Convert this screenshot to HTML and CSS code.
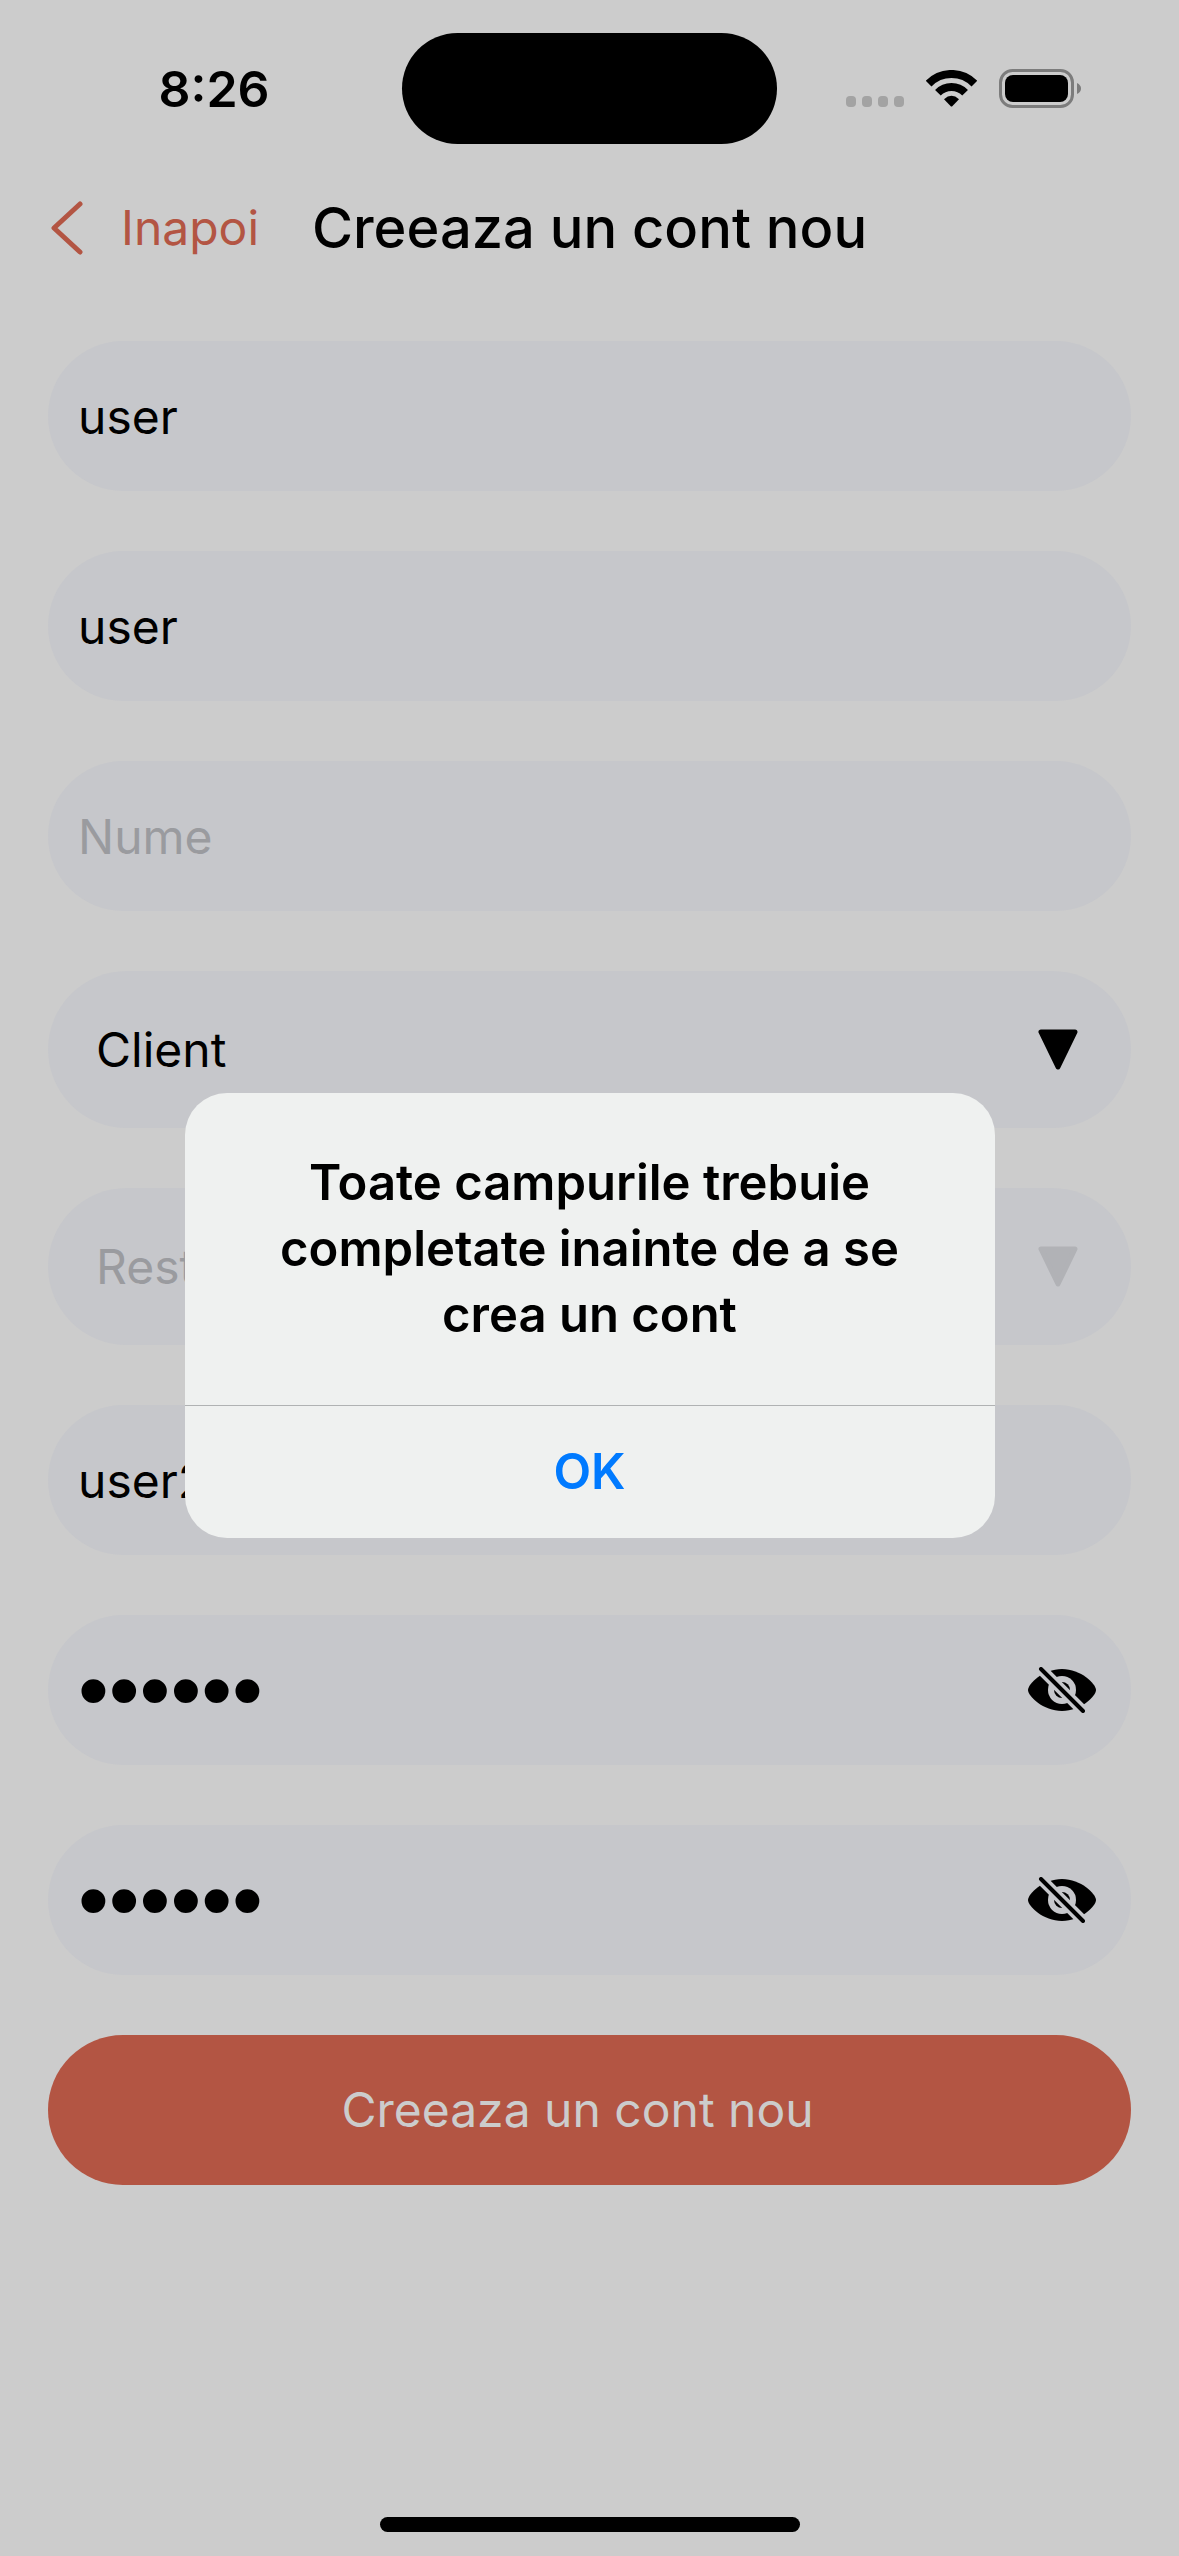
FILE: index.html
```html
<!DOCTYPE html>
<html lang="ro">
<head>
  <meta charset="utf-8">
  <meta name="viewport" content="width=device-width, initial-scale=1">
  <title>Creeaza un cont nou</title>
  <link rel="stylesheet" href="styles.css">
</head>
<body>
  <svg class="sprite" aria-hidden="true">
    <symbol id="icon-caret" viewBox="0 0 40 42">
      <path d="M3 3H37L20 38Z" fill="currentColor" stroke="currentColor" stroke-width="5" stroke-linejoin="round"/>
    </symbol>
    <symbol id="icon-eye-off" viewBox="0 0 68 46">
      <mask id="eye-cut">
        <rect width="68" height="46" fill="#fff"/>
        <circle cx="34" cy="23" r="14" fill="#000"/>
        <circle cx="34" cy="23" r="8" fill="#fff"/>
        <path d="M13 2 56 45" stroke="#000" stroke-width="11"/>
      </mask>
      <path d="M0 23C0 17 15 2 34 2S68 17 68 23 53 44 34 44 0 29 0 23Z" fill="currentColor" mask="url(#eye-cut)"/>
      <path d="M13 2 55 44" stroke="currentColor" stroke-width="4" stroke-linecap="round"/>
    </symbol>
  </svg>

  <div class="status-bar">
    <time class="status-time">8:26</time>
    <div class="island"></div>
    <div class="status-icons">
      <div class="signal"><span></span><span></span><span></span><span></span></div>
      <svg class="wifi" viewBox="0 0 51 37" aria-hidden="true">
        <g fill="none" stroke="#000" stroke-width="8">
          <path d="M2.6 13.6A32 32 0 0 1 48.4 13.6"/>
          <path d="M11.9 22.8A19 19 0 0 1 39.1 22.8"/>
        </g>
        <path d="M18 29.2Q25.5 22.400 33 29.200L26.500 36Q25.500 37 24.500 36Z"/>
      </svg>
      <svg class="battery" viewBox="0 0 82 39" aria-hidden="true">
        <rect x="1.500" y="1.500" width="72" height="36" rx="12" fill="none" stroke="#7c7c7c" stroke-width="3"/>
        <rect x="6" y="6" width="63" height="27" rx="8"/>
        <path d="M78 14Q82 16 82 19.500T78 25Z" fill="#7c7c7c"/>
      </svg>
    </div>
  </div>

  <header class="nav">
    <a class="back" href="#">
      <svg class="chevron" viewBox="0 0 32 54" aria-hidden="true"><path d="M29 3 3 27 29 51"/></svg>
      Inapoi
    </a>
    <h1 class="title">Creeaza un cont nou</h1>
  </header>

  <main>
    <form class="form">
      <input class="field" type="text" value="user" aria-label="Utilizator">
      <input class="field" type="text" value="user" aria-label="Prenume">
      <input class="field" type="text" placeholder="Nume" aria-label="Nume">
      <div class="picker">
        <select class="field" aria-label="Tip cont"><option>Client</option></select>
        <svg class="caret" aria-hidden="true"><use href="#icon-caret"/></svg>
      </div>
      <div class="picker">
        <select class="field" aria-label="Restaurant" disabled><option>Restaurant</option></select>
        <svg class="caret" aria-hidden="true"><use href="#icon-caret"/></svg>
      </div>
      <input class="field" type="text" value="user2" aria-label="Email">
      <div class="secret">
        <input class="field" type="password" value="123456" aria-label="Parola">
        <button class="reveal" type="button" aria-label="Arata parola"><svg class="eye" aria-hidden="true"><use href="#icon-eye-off"/></svg></button>
      </div>
      <div class="secret">
        <input class="field" type="password" value="123456" aria-label="Confirma parola">
        <button class="reveal" type="button" aria-label="Arata parola"><svg class="eye" aria-hidden="true"><use href="#icon-eye-off"/></svg></button>
      </div>
      <button class="submit" type="submit">Creeaza un cont nou</button>
    </form>
  </main>

  <div class="home-indicator"></div>

  <div class="overlay">
    <div class="alert" role="alertdialog" aria-modal="true" aria-labelledby="alert-title">
      <h2 class="alert-title" id="alert-title">Toate campurile trebuie completate inainte de a se crea un cont</h2>
      <button class="alert-ok" type="button">OK</button>
    </div>
  </div>
</body>
</html>
```

FILE: styles.css
```css
* {
  box-sizing: border-box;
}

body {
  margin: 0;
  min-height: 100vh;
  display: flex;
  flex-direction: column;
  background: #ccc;
  color: #000;
  font-family: Inter, "Liberation Sans", sans-serif;
  font-size: 48px;
  line-height: 66px;
}

button,
input,
select {
  font: inherit;
  color: inherit;
  border: 0;
  margin: 0;
}

.sprite {
  position: absolute;
  width: 0;
  height: 0;
}

/* Status bar */
.status-bar {
  display: grid;
  grid-template-columns: 1fr auto 1fr;
  align-items: center;
  height: 177px;
}

.status-time {
  justify-self: center;
  padding-left: 26px;
  font-size: 50px;
  font-weight: 600;
}

.island {
  width: 375px;
  height: 111px;
  border-radius: 56px;
  background: #000;
}

.status-icons {
  display: flex;
  align-items: center;
  justify-content: flex-end;
  gap: 22px;
  padding-right: 98px;
}

.signal {
  display: flex;
  align-self: flex-end;
  gap: 6px;
  padding-bottom: 1px;
}

.signal span {
  width: 10px;
  height: 11px;
  border-radius: 4px;
  background: #a3a3a3;
}

.wifi {
  width: 51px;
  height: 37px;
}

.battery {
  width: 82px;
  height: 39px;
}

/* Navigation */
.nav {
  display: grid;
  grid-template-columns: 1fr auto 1fr;
  align-items: center;
  height: 102px;
}

.back {
  display: flex;
  align-items: center;
  gap: 38px;
  padding-left: 51px;
  color: #b35543;
  text-decoration: none;
}

.chevron {
  width: 32px;
  height: 54px;
  fill: none;
  stroke: currentColor;
  stroke-width: 5;
  stroke-linecap: round;
  stroke-linejoin: round;
}

.title {
  margin: 0;
  font-size: 56px;
  font-weight: 500;
}

/* Form */
.form {
  display: flex;
  flex-direction: column;
  gap: 60px;
  padding: 62px 48px;
}

.field {
  width: 100%;
  height: 150px;
  padding: 0 30px;
  border-radius: 75px;
  background: #c6c7cb;
}

.field::placeholder {
  color: #9a9b9f;
  opacity: 1;
}

.picker,
.secret {
  display: grid;
  align-items: center;
}

.picker > *,
.secret > * {
  grid-area: 1 / 1;
}

.picker .field {
  height: 157px;
  padding: 0 48px;
  border-radius: 79px;
  appearance: none;
}

.picker .field:disabled {
  color: #9a9b9f;
  opacity: 1;
}

.caret {
  justify-self: end;
  width: 40px;
  height: 42px;
  margin-right: 53px;
  pointer-events: none;
}

.field:disabled + .caret {
  color: #b1b2b6;
}

.secret .field {
  padding-right: 120px;
  font-family: "Liberation Sans", sans-serif;
  font-size: 88px;
}

.reveal {
  display: flex;
  justify-self: end;
  margin-right: 35px;
  padding: 0;
  background: none;
}

.eye {
  width: 68px;
  height: 46px;
}

.submit {
  height: 150px;
  padding: 0 24px 0 0;
  border-radius: 75px;
  background: #b35543;
  color: #ccc;
}

.home-indicator {
  width: 420px;
  height: 15px;
  margin: auto auto 24px;
  border-radius: 8px;
  background: #000;
}

/* Alert, centred inside the safe area */
.overlay {
  position: fixed;
  inset: 0;
  display: flex;
  align-items: center;
  justify-content: center;
  padding: 177px 48px 102px;
}

.alert {
  width: 810px;
  max-width: 100%;
  border-radius: 42px;
  background: #eff1f0;
  overflow: hidden;
}

.alert-title {
  margin: 0;
  padding: 57px 48px;
  font-size: 49px;
  font-weight: 600;
  text-align: center;
}

.alert-ok {
  display: block;
  width: 100%;
  height: 133px;
  border-top: 1px solid #b0b2b3;
  background: none;
  color: #007aff;
  font-size: 49px;
  font-weight: 600;
}
```
